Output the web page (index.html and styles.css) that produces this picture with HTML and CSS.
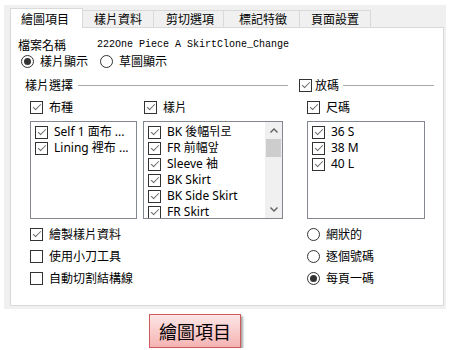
FILE: index.html
```html
<!DOCTYPE html>
<html>
<head>
<meta charset="utf-8">
<link rel="stylesheet" href="styles.css">
</head>
<body>
<div class="window">
  <div class="tabs">
    <div class="tab active">繪圖項目</div>
    <div class="tab">樣片資料</div>
    <div class="tab">剪切選項</div>
    <div class="tab">標記特徵</div>
    <div class="tab">頁面設置</div>
  </div>
  <div class="panel">
    <div class="file-row"><span class="lbl">檔案名稱</span><span class="fname">222One Piece A SkirtClone_Change</span></div>
    <div class="radio-row">
      <div class="opt"><span class="rb on"></span>樣片顯示</div>
      <div class="opt"><span class="rb"></span>草圖顯示</div>
    </div>
    <div class="groups">
      <section class="group left">
        <div class="ghead"><span class="gtitle">樣片選擇</span><span class="rule"></span></div>
        <div class="cols">
          <div class="col col-a">
            <div class="chk"><span class="cb on"></span>布種</div>
            <div class="list">
              <div class="item"><span class="cb on"></span>Self 1 面布 ...</div>
              <div class="item"><span class="cb on"></span>Lining 裡布 ...</div>
            </div>
          </div>
          <div class="col col-b">
            <div class="chk shift"><span class="cb on"></span>樣片</div>
            <div class="list scroll">
              <div class="items">
                <div class="item"><span class="cb on"></span>BK 後幅뒤로</div>
                <div class="item"><span class="cb on"></span>FR 前幅앞</div>
                <div class="item"><span class="cb on"></span>Sleeve 袖</div>
                <div class="item"><span class="cb on"></span>BK Skirt</div>
                <div class="item"><span class="cb on"></span>BK Side Skirt</div>
                <div class="item"><span class="cb on"></span>FR Skirt</div>
              </div>
              <div class="sbar">
                <div class="arrow"><svg width="8" height="5" viewBox="0 0 8 5"><polyline points="0.5,4.5 4,1 7.5,4.5" fill="none" stroke="#606060" stroke-width="1.4"/></svg></div>
                <div class="thumb"></div>
                <div class="track"></div>
                <div class="arrow"><svg width="8" height="5" viewBox="0 0 8 5"><polyline points="0.5,0.5 4,4 7.5,0.5" fill="none" stroke="#606060" stroke-width="1.4"/></svg></div>
              </div>
            </div>
          </div>
        </div>
        <div class="opts">
          <div class="chk"><span class="cb on"></span>繪製樣片資料</div>
          <div class="chk"><span class="cb"></span>使用小刀工具</div>
          <div class="chk"><span class="cb"></span>自動切割結構線</div>
        </div>
      </section>
      <section class="group right">
        <div class="ghead"><span class="cb on"></span><span class="gtitle">放碼</span><span class="rule"></span></div>
        <div class="rbody">
          <div class="chk"><span class="cb on"></span>尺碼</div>
          <div class="list sizes">
            <div class="item"><span class="cb on"></span>36 S</div>
            <div class="item"><span class="cb on"></span>38 M</div>
            <div class="item"><span class="cb on"></span>40 L</div>
          </div>
          <div class="opts">
            <div class="opt"><span class="rb"></span>網狀的</div>
            <div class="opt"><span class="rb"></span>逐個號碼</div>
            <div class="opt"><span class="rb on"></span>每頁一碼</div>
          </div>
        </div>
      </section>
    </div>
  </div>
</div>
<button class="action">繪圖項目</button>
</body>
</html>
```
FILE: styles.css
```css
html, body {
  margin: 0;
  background: #fff;
}
body {
  font-family: "Noto Sans", "Noto Sans CJK TC", sans-serif;
  font-size: 12px;
  line-height: 16px;
  color: #000;
}
.window {
  margin: 5px 0 0 4px;
  width: 442px;
  box-sizing: border-box;
  background: #f0f0f0;
  padding: 3px 2px 3px 6px;
}
.tabs {
  display: flex;
  align-items: flex-end;
  height: 19px;
  font-family: "Noto Sans CJK TC", sans-serif;
}
.tab {
  height: 17px;
  box-sizing: border-box;
  border: 1px solid #d9d9d9;
  border-bottom: none;
  margin-left: -1px;
  padding: 0 11px;
  display: flex;
  align-items: center;
  background: #f0f0f0;
}
.tab:first-child { margin-left: 0; }
.tab.active {
  height: 20px;
  margin-bottom: -1px;
  background: #fff;
  padding: 0 13px 0 10px;
  position: relative;
  z-index: 1;
}
.tab:nth-child(3) { padding: 0 9px 0 12px; }
.tab:nth-child(4) { padding: 0 12px 0 15px; }
.panel {
  background: #fff;
  border: 1px solid #d9d9d9;
  height: 279px;
  box-sizing: border-box;
  padding: 9px 0 0 7px;
}
.file-row {
  display: flex;
  align-items: center;
  height: 16px;
}
.lbl { font-family: "Noto Sans CJK TC", sans-serif; width: 79px; }
.fname {
  font-family: "Liberation Mono", monospace;
  font-size: 10px;
  letter-spacing: 0;
}
.radio-row {
  display: flex;
  height: 16px;
  padding-left: 3px;
  gap: 12px;
}
.opt, .chk {
  display: flex;
  align-items: center;
  gap: 6px;
  height: 16px;
  white-space: nowrap;
  font-family: "Noto Sans CJK TC", sans-serif;
}
.rb {
  width: 13px;
  height: 13px;
  box-sizing: border-box;
  border: 1px solid #333;
  border-radius: 50%;
  display: inline-flex;
  align-items: center;
  justify-content: center;
  flex: none;
  background: #fff;
}
.rb.on::after {
  content: "";
  width: 7px;
  height: 7px;
  border-radius: 50%;
  background: #333;
}
.cb {
  width: 13px;
  height: 13px;
  box-sizing: border-box;
  border: 1px solid #333;
  background: #fff;
  flex: none;
  position: relative;
}
.cb.on::after {
  content: "";
  position: absolute;
  left: 3.5px;
  top: 0.5px;
  width: 3px;
  height: 7px;
  border: solid #6a6a6a;
  border-width: 0 1.4px 1.4px 0;
  transform: rotate(45deg);
}
.groups {
  display: flex;
  margin-top: 8px;
}
.group.left { width: 272px; }
.group.right { width: 135px; margin-left: 9px; }
.ghead {
  display: flex;
  align-items: center;
  height: 16px;
  font-family: "Noto Sans CJK TC", sans-serif;
}
.group.left .ghead { padding-left: 7px; }
.group.right .ghead .gtitle { margin-left: 3px; }
.rule {
  flex: 1;
  height: 1px;
  background: #a8a8a8;
  margin: 1px 2px 0 5px;
}
.group.right .rule { margin: 1px 0 0 4px; }
.cols {
  display: flex;
  gap: 6px;
  margin-top: 6px;
  padding-left: 12px;
}
.col { display: flex; flex-direction: column; gap: 6px; }
.col-a { width: 107px; }
.col-b { width: 140px; }
.chk.shift { padding-left: 1px; }
.list {
  height: 98px;
  box-sizing: border-box;
  border: 1px solid #828790;
  background: #fff;
  padding: 2px 0 0 4px;
  overflow: hidden;
}
.list.scroll {
  display: flex;
  padding: 0;
}
.items {
  flex: 1;
  padding: 2px 0 0 4px;
}
.item {
  display: flex;
  align-items: center;
  gap: 6px;
  height: 16px;
  white-space: nowrap;
}
.sbar {
  width: 17px;
  background: #f0f0f0;
  display: flex;
  flex-direction: column;
}
.arrow {
  height: 17px;
  display: flex;
  align-items: center;
  justify-content: center;
}
.thumb {
  height: 18px;
  margin: 0 1px;
  background: #cdcdcd;
}
.track { flex: 1; }
.opts {
  display: flex;
  flex-direction: column;
  gap: 6px;
  margin-top: 7px;
  padding-left: 12px;
}
.rbody {
  display: flex;
  flex-direction: column;
  margin-top: 6px;
  padding-left: 8px;
}
.rbody .list { margin-top: 6px; width: 118px; }
.rbody .opts { padding-left: 0; }
.rbody .opt { gap: 6px; }
.action {
  display: block;
  margin: 5px 0 0 149px;
  width: 92px;
  height: 34px;
  padding: 0;
  border: 1px solid #cf5a5a;
  background: linear-gradient(#fde6e6, #f5b3b3);
  box-shadow: 2px 2px 2px rgba(0, 0, 0, 0.35);
  font-family: "Noto Sans CJK TC", sans-serif;
  font-size: 18px;
  color: #000;
}
```
